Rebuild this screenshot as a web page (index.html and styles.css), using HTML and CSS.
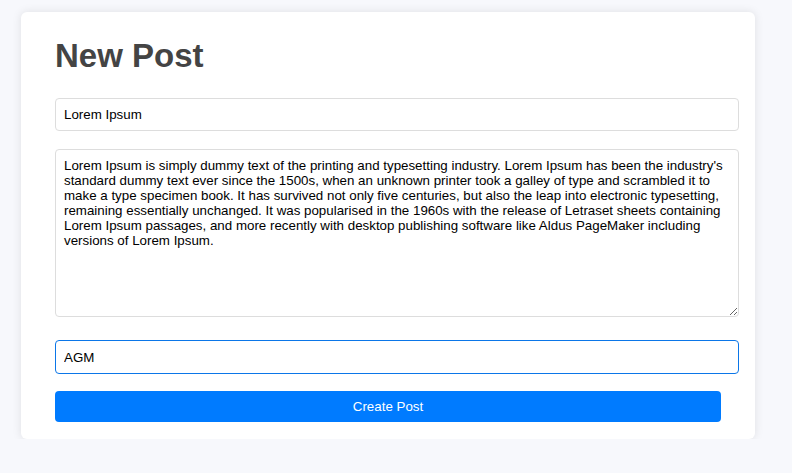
FILE: index.html
```html
<!DOCTYPE html>
<html>
<head>
<meta charset="utf-8">
<link rel="stylesheet" href="styles.css">
</head>
<body>
<div class="card">
  <h1 class="title">New Post</h1>
  <input class="field" type="text" value="Lorem Ipsum">
  <textarea class="field area">Lorem Ipsum is simply dummy text of the printing and typesetting industry. Lorem Ipsum has been the industry's standard dummy text ever since the 1500s, when an unknown printer took a galley of type and scrambled it to make a type specimen book. It has survived not only five centuries, but also the leap into electronic typesetting, remaining essentially unchanged. It was popularised in the 1960s with the release of Letraset sheets containing Lorem Ipsum passages, and more recently with desktop publishing software like Aldus PageMaker including versions of Lorem Ipsum.</textarea>
  <input class="field focus" type="text" value="AGM">
  <button class="btn">Create Post</button>
</div>
</body>
</html>
```
FILE: styles.css
```css
html, body {
  margin: 0;
  padding: 0;
  background: #f7f8fc;
  font-family: "Liberation Sans", Arial, sans-serif;
}
body {
  padding: 12px 37px 0 21px;
}
.card {
  width: 666px;
  background: #fff;
  border-radius: 6px;
  box-shadow: 0 0 10px rgba(0, 0, 0, 0.1);
  padding: 25px 34px 17px 34px;
}
.title {
  margin: 0 0 24px 0;
  font-size: 33px;
  line-height: 37px;
  font-weight: bold;
  color: #444;
}
.field {
  display: block;
  width: 666px;
  padding: 8px;
  border: 1px solid #ddd;
  border-radius: 4px;
  font-family: "Liberation Sans", Arial, sans-serif;
  font-size: 13.333px;
  line-height: 15px;
  color: #000;
  margin: 0 0 18px 0;
  outline: none;
}
.area {
  height: 150px;
  resize: vertical;
  margin-bottom: 23px;
}
.focus {
  border-color: #0b76e8;
  height: 16px;
  margin-bottom: 17px;
}
.btn {
  display: block;
  width: 666px;
  height: 31px;
  border: none;
  border-radius: 4px;
  background: #007bff;
  color: #fff;
  font-family: "Liberation Sans", Arial, sans-serif;
  font-size: 13.333px;
  padding: 0;
}
```
